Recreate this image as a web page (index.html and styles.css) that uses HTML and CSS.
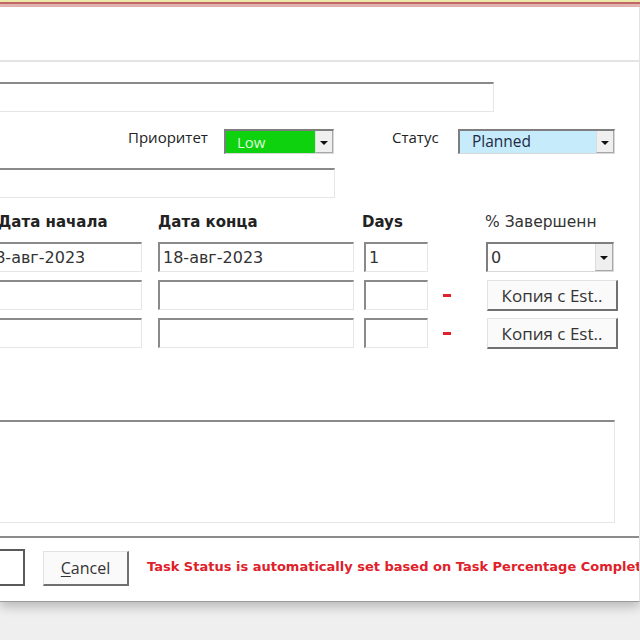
FILE: index.html
```html
<!DOCTYPE html>
<html>
<head>
<meta charset="utf-8">
<link rel="stylesheet" href="styles.css">
</head>
<body>
<div class="strip"></div>
<div class="dialog">
  <div class="titlebar"></div>
  <div class="content">
    <div class="field title-field"></div>

    <div class="prio-row">
      <span class="lbl lbl-prio">Приоритет</span>
      <div class="select sel-green">
        <span class="val">Low</span>
        <span class="arrow"><i class="tri"></i></span>
      </div>
      <span class="lbl lbl-status">Статус</span>
      <div class="select sel-blue">
        <span class="val">Planned</span>
        <span class="arrow"><i class="tri"></i></span>
      </div>
    </div>

    <div class="field short-field"></div>

    <div class="heads">
      <span class="h h1">Дата начала</span>
      <span class="h h2">Дата конца</span>
      <span class="h h3">Days</span>
      <span class="h h5">% Завершенн</span>
    </div>

    <div class="drow">
      <div class="field c1">18-авг-2023</div>
      <div class="field c2">18-авг-2023</div>
      <div class="field c3">1</div>
      <div class="c4"></div>
      <div class="select sel-pct">
        <span class="val">0</span>
        <span class="arrow"><i class="tri"></i></span>
      </div>
    </div>
    <div class="drow">
      <div class="field c1"></div>
      <div class="field c2"></div>
      <div class="field c3"></div>
      <div class="c4"><i class="dash"></i></div>
      <div class="btn copy">Копия с Est..</div>
    </div>
    <div class="drow">
      <div class="field c1"></div>
      <div class="field c2"></div>
      <div class="field c3"></div>
      <div class="c4"><i class="dash"></i></div>
      <div class="btn copy">Копия с Est..</div>
    </div>

    <div class="field notes"></div>
  </div>

  <div class="footer">
    <div class="btn ok"></div>
    <div class="btn cancel"><u>C</u>ancel</div>
    <span class="note">Task Status is automatically set based on Task Percentage Complete</span>
  </div>
</div>
</body>
</html>
```
FILE: styles.css
```css
* { box-sizing: border-box; }
html, body {
  margin: 0;
  padding: 0;
  width: 640px;
  height: 640px;
  overflow: hidden;
  background: #efefef;
}
.strip {
  height: 7px;
  background: linear-gradient(to bottom, #efe7a6 0 2px, #c06868 2px 4px, #e6b6b2 4px 7px);
}
.dialog {
  background: #fff;
  border-bottom: 1px solid #9a9a9a;
  border-right: 1px solid #e2e2e2;
  box-shadow: 0 5px 10px rgba(0,0,0,0.22);
  overflow: hidden;
}
.titlebar {
  height: 55px;
  border-bottom: 2px solid #e4e4e4;
}
.content {
  margin-left: -40px;
  padding-top: 20px;
  font-family: "DejaVu Sans", Verdana, sans-serif;
  font-size: 15px;
  color: #222;
}
.field {
  background: #fff;
  border-top: 2px solid #8a8a8a;
  border-left: 2px solid #8a8a8a;
  border-right: 1px solid #e6e6e6;
  border-bottom: 1px solid #e6e6e6;
  height: 30px;
  padding: 0 3px;
  display: flex;
  align-items: center;
  font-family: "DejaVu Sans", Verdana, sans-serif;
  font-size: 16px;
  color: #333;
  white-space: nowrap;
  overflow: hidden;
}
.title-field { width: 534px; }
.short-field { width: 375px; margin-top: 14px; }

.prio-row {
  display: flex;
  align-items: flex-start;
  margin-top: 17px;
  height: 25px;
  font-family: "Open Sans", "Noto Sans", sans-serif;
}
.lbl {
  font-size: 15px;
  line-height: 18px;
  color: #222;
  margin-top: -1px;
}
.lbl-prio { margin-left: 168px; width: 96px; }
.lbl-status { margin-left: 58px; width: 66px; }

.select {
  display: flex;
  height: 25px;
  border-top: 2px solid #7e7e7e;
  border-left: 2px solid #7e7e7e;
  border-right: 1px solid #d8d8d8;
  border-bottom: 1px solid #d8d8d8;
  font-family: "Open Sans", "Noto Sans", sans-serif;
  font-size: 15px;
}
.select .val {
  flex: 1;
  display: flex;
  align-items: center;
  line-height: 1;
}
.select .arrow {
  width: 18px;
  background: #efefef;
  border-left: 1px solid #dcdcdc;
  border-bottom: 1px solid #a8a8a8;
  border-right: 1px solid #a8a8a8;
  display: flex;
  align-items: center;
  justify-content: center;
}
.tri {
  width: 0;
  height: 0;
  border-left: 4px solid transparent;
  border-right: 4px solid transparent;
  border-top: 4px solid #111;
  margin-top: 2px;
}
.sel-green { width: 110px; background: #0ed20e; }
.sel-green .val { color: #dcfadc; padding-left: 11px; }
.sel-blue { width: 157px; background: #c6ebfb; }
.sel-blue .val { color: #1e2a44; padding-left: 12px; font-size: 15.5px; }

.heads {
  display: flex;
  margin-top: 14px;
  height: 20px;
  line-height: 20px;
}
.h { font-weight: bold; color: #222; }
.h1 { margin-left: 38px; width: 160px; }
.h2 { width: 204px; }
.h3 { width: 123px; }
.h5 { font-weight: normal; color: #333; font-size: 15.5px; }

.drow {
  display: flex;
  margin-top: 8px;
  height: 30px;
}
.heads + .drow { margin-top: 10px; }
.c1 { margin-left: 20px; width: 162px; }
.c2 { margin-left: 16px; width: 196px; }
.c3 { margin-left: 10px; width: 64px; }
.c4 {
  width: 58px;
  display: flex;
  align-items: center;
  justify-content: center;
  padding-right: 20px;
}
.dash {
  width: 8px;
  height: 3px;
  background: #e0202a;
}
.sel-pct {
  width: 128px;
  height: 30px;
  background: #fff;
  font-family: "DejaVu Sans", Verdana, sans-serif;
  font-size: 16px;
  color: #333;
}
.sel-pct .val { padding-left: 3px; }

.btn {
  background: #fafafa;
  border-top: 1px solid #e2e2e2;
  border-left: 1px solid #e2e2e2;
  border-right: 2px solid #707070;
  border-bottom: 2px solid #707070;
  display: flex;
  align-items: center;
  justify-content: center;
  font-family: "Open Sans", "Noto Sans", sans-serif;
  font-size: 16px;
  color: #333;
  white-space: nowrap;
}
.copy { width: 131px; height: 31px; margin-left: 1px; font-size: 17px; }

.notes {
  width: 655px;
  height: 103px;
  margin-top: 72px;
}

.footer {
  margin-top: 13px;
  border-top: 2px solid #8c8c8c;
  display: flex;
  align-items: flex-start;
  margin-left: -50px;
  padding-top: 11px;
  padding-bottom: 15px;
}
.ok {
  width: 75px;
  height: 37px;
  background: #fff;
  border: 2px solid #5a5a5a;
  flex: none;
}
.cancel {
  width: 86px;
  height: 35px;
  margin-left: 18px;
  margin-top: 2px;
  color: #333;
  flex: none;
}
.cancel u { text-decoration-thickness: 1px; text-underline-offset: 2px; }
.note {
  margin-left: 18px;
  margin-top: 10px;
  white-space: nowrap;
  font-family: "DejaVu Sans", Verdana, sans-serif;
  font-weight: bold;
  font-size: 13px;
  color: #e0202a;
}
```
